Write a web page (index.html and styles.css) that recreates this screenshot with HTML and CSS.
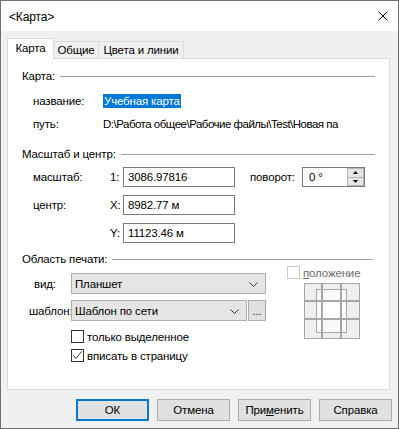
FILE: index.html
```html
<!DOCTYPE html>
<html lang="ru">
<head>
<meta charset="utf-8">
<title>Карта</title>
<link rel="stylesheet" href="styles.css">
</head>
<body>
<div class="window">
  <div class="titlebar">
    <span class="title">&lt;Карта&gt;</span>
    <svg class="close" width="10" height="10" viewBox="0 0 10 10"><path d="M0.5 0.5 L9.5 9.5 M9.5 0.5 L0.5 9.5" stroke="#000" stroke-width="1" fill="none"/></svg>
  </div>
  <div class="body">
    <div class="tabs">
      <div class="tab active">Карта</div>
      <div class="tab t2">Общие</div>
      <div class="tab t3">Цвета и линии</div>
    </div>
    <div class="panel">
      <div class="group-head"><span>Карта:</span><span class="rule"></span></div>
      <div class="row r-name"><span class="lbl-map">название:</span><span class="sel-text">Учебная карта</span></div>
      <div class="row r-path"><span class="lbl-map">путь:</span><span class="path">D:\Работа общее\Рабочие файлы\Test\Новая па</span></div>

      <div class="group-head g2"><span>Масштаб и центр:</span><span class="rule"></span></div>
      <div class="row r-field r-scale">
        <span class="lbl-scale">масштаб:</span><span class="prefix">1:</span><span class="field">3086.97816</span>
        <span class="lbl-rot">поворот:</span>
        <span class="spin"><span class="spin-val">0 °</span><span class="spin-btns"><span class="sb"><svg width="5" height="3" viewBox="0 0 5 3"><path d="M2.5 0 L5 3 L0 3 Z" fill="#000"/></svg></span><span class="sb"><svg width="5" height="3" viewBox="0 0 5 3"><path d="M0 0 L5 0 L2.5 3 Z" fill="#000"/></svg></span></span></span>
      </div>
      <div class="row r-field r-x">
        <span class="lbl-scale">центр:</span><span class="prefix">X:</span><span class="field">8982.77 м</span>
      </div>
      <div class="row r-field r-y">
        <span class="lbl-scale"></span><span class="prefix">Y:</span><span class="field">11123.46 м</span>
      </div>

      <div class="group-head g3"><span>Область печати:</span><span class="rule"></span></div>
      <div class="print">
        <div class="print-left">
          <div class="row r-view">
            <span class="lbl-view">вид:</span>
            <span class="combo combo-view"><span>Планшет</span><svg class="chev" width="9" height="5" viewBox="0 0 9 5"><path d="M0.5 0.5 L4.5 4.5 L8.5 0.5" stroke="#333" fill="none"/></svg></span>
          </div>
          <div class="row r-tpl">
            <span class="lbl-tpl">шаблон:</span>
            <span class="combo combo-tpl"><span>Шаблон по сети</span><svg class="chev" width="9" height="5" viewBox="0 0 9 5"><path d="M0.5 0.5 L4.5 4.5 L8.5 0.5" stroke="#333" fill="none"/></svg></span>
            <span class="dots">...</span>
          </div>
          <div class="row r-cb1"><span class="cb"></span><span>только выделенное</span></div>
          <div class="row r-cb2"><span class="cb"><svg width="11" height="11" viewBox="0 0 11 11"><path d="M1.5 5.5 L4 8.5 L9.5 1.5" stroke="#333" stroke-width="1" fill="none"/></svg></span><span>вписать в страницу</span></div>
        </div>
        <div class="print-right">
          <div class="pos-row"><span class="cb cb-dis"></span><span class="pos-lbl"><u>п</u>оложение</span></div>
          <svg class="pos-grid" width="56" height="56" viewBox="0 0 56 56">
            <g fill="#efefef">
              <rect x="0" y="0" width="18" height="18"/><rect x="18" y="0" width="19" height="18"/><rect x="37" y="0" width="19" height="18"/>
              <rect x="0" y="18" width="18" height="18"/><rect x="18" y="18" width="19" height="18"/><rect x="37" y="18" width="19" height="18"/>
              <rect x="0" y="36" width="18" height="20"/><rect x="18" y="36" width="19" height="20"/><rect x="37" y="36" width="19" height="20"/>
            </g>
            <rect x="12" y="6" width="31" height="44" fill="#f9f9f9"/>
            <rect x="19" y="19" width="17" height="16" fill="#ffffff"/>
            <g fill="none" stroke="#a6a6a6" stroke-width="1">
              <rect x="0.5" y="0.5" width="17" height="17"/><rect x="18.5" y="0.5" width="18" height="17"/><rect x="37.5" y="0.5" width="18" height="17"/>
              <rect x="0.5" y="18.5" width="17" height="17"/><rect x="18.5" y="18.5" width="18" height="17"/><rect x="37.5" y="18.5" width="18" height="17"/>
              <rect x="0.5" y="36.5" width="17" height="19"/><rect x="18.5" y="36.5" width="18" height="19"/><rect x="37.5" y="36.5" width="18" height="19"/>
              <rect x="12.5" y="6.5" width="30" height="43"/>
            </g>
          </svg>
        </div>
      </div>
    </div>
    <div class="buttons">
      <span class="btn btn-default">ОК</span>
      <span class="btn">Отмена</span>
      <span class="btn">При<u>м</u>енить</span>
      <span class="btn">Справка</span>
    </div>
  </div>
</div>
</body>
</html>
```

FILE: styles.css
```css
* { box-sizing: border-box; }
html, body { margin: 0; padding: 0; }
body {
  font-family: "Liberation Sans", Arial, sans-serif;
  font-size: 11.5px;
  letter-spacing: -0.15px;
  color: #000;
  background: #f0f0f0;
}
.window {
  width: 399px;
  height: 429px;
  border: 1px solid #707070;
  display: flex;
  flex-direction: column;
  background: #f0f0f0;
}
.titlebar {
  height: 30px;
  background: #fff;
  display: flex;
  align-items: center;
  justify-content: space-between;
  padding: 0 10px 0 8px;
}
.title { line-height: 14px; margin-top: 1px; font-size: 12px; }
.close { display: block; }
.body {
  flex: 1;
  padding: 7px 6px 0 6px;
  display: flex;
  flex-direction: column;
}
.tabs {
  height: 20px;
  display: flex;
  align-items: flex-end;
}
.tab {
  height: 17px;
  border: 1px solid #d9d9d9;
  border-bottom: none;
  background: #f0f0f0;
  display: flex;
  align-items: center;
  justify-content: center;
  line-height: 14px;
  white-space: nowrap;
}
.tab.active {
  height: 21px;
  width: 47px;
  margin-bottom: -1px;
  background: #fff;
  position: relative;
  z-index: 1;
  padding-bottom: 2px;
}
.t2 { width: 45px; border-left: none; }
.t3 { width: 86px; margin-left: -1px; }
.panel {
  width: 383px;
  height: 332px;
  background: #fff;
  border: 1px solid #d9d9d9;
  padding: 10px 14px 0 14px;
  display: flex;
  flex-direction: column;
}
.group-head {
  height: 14px;
  display: flex;
  align-items: center;
  line-height: 14px;
}
.rule {
  flex: 1;
  height: 1px;
  background: #a0a0a0;
  margin-left: 5px;
}
.g2 { margin-top: 14px; }
.g3 { margin-top: 9px; }
.g3 .rule { margin-right: 2px; }
.row {
  display: flex;
  align-items: center;
  line-height: 14px;
  white-space: nowrap;
}
.r-name { height: 18px; margin-top: 9px; padding-left: 11px; }
.r-path { height: 18px; margin-top: 5px; padding-left: 11px; }
.lbl-map { width: 70px; }
.path { letter-spacing: -0.5px; }
.sel-text {
  background: #0078d7;
  color: #fff;
  padding: 0 1px;
  line-height: 14px;
}
.r-field { height: 20px; padding-left: 11px; }
.r-scale { margin-top: 6px; }
.r-x, .r-y { margin-top: 8px; }
.lbl-scale { width: 77px; }
.prefix { width: 13px; }
.field {
  width: 112px;
  height: 20px;
  border: 1px solid #7a7a7a;
  background: #fff;
  padding-left: 4px;
  display: flex;
  align-items: center;
}
.lbl-rot { width: 52px; margin-left: 15px; }
.spin {
  width: 63px;
  height: 20px;
  border: 1px solid #7a7a7a;
  display: flex;
  align-items: center;
  justify-content: space-between;
  padding-left: 6px;
}
.spin-btns {
  width: 17px;
  height: 18px;
  display: flex;
  flex-direction: column;
}
.sb {
  flex: 1;
  background: #e6e6e6;
  border: 1px solid #b5b5b5;
  display: flex;
  align-items: center;
  justify-content: center;
}
.sb + .sb { border-top: none; }
.sb svg { display: block; }
.print { display: flex; }
.print-left { width: 244px; padding-top: 7px; display: flex; flex-direction: column; }
.r-view { height: 21px; }
.r-tpl { height: 21px; margin-top: 6px; }
.lbl-view { margin-left: 12px; width: 37px; }
.lbl-tpl { margin-left: 7px; width: 42px; }
.combo {
  height: 21px;
  background: #e5e5e5;
  border: 1px solid #adadad;
  display: flex;
  align-items: center;
  justify-content: space-between;
  padding: 0 7px 0 3px;
}
.combo-view { width: 195px; }
.combo-tpl { width: 176px; }
.chev { display: block; margin-top: 1px; }
.dots {
  width: 18px;
  height: 21px;
  margin-left: 1px;
  background: #e1e1e1;
  border: 1px solid #adadad;
  display: flex;
  align-items: flex-end;
  justify-content: center;
  padding-bottom: 4px;
  color: #1a1a4a;
  line-height: 10px;
}
.r-cb1 { height: 13px; margin-top: 9px; padding-left: 49px; }
.r-cb2 { height: 13px; margin-top: 6px; padding-left: 49px; }
.cb {
  width: 13px;
  height: 13px;
  border: 1px solid #333;
  background: #fff;
  margin-right: 3px;
  display: flex;
  align-items: center;
  justify-content: center;
}
.cb svg { display: block; }
.print-right { margin-left: 21px; display: flex; flex-direction: column; }
.pos-row { height: 13px; display: flex; align-items: center; line-height: 14px; }
.cb-dis { border-color: #cccccc; }
.pos-lbl { color: #6d6d6d; }
.pos-grid { display: block; margin-top: 4px; margin-left: 17px; }
.buttons {
  margin-top: 9px;
  display: flex;
  justify-content: flex-end;
  gap: 8px;
}
.btn {
  width: 73px;
  height: 22px;
  background: #e1e1e1;
  border: 1px solid #adadad;
  display: flex;
  align-items: center;
  justify-content: center;
  line-height: 14px;
}
.btn-default { border: 2px solid #0078d7; }
```
